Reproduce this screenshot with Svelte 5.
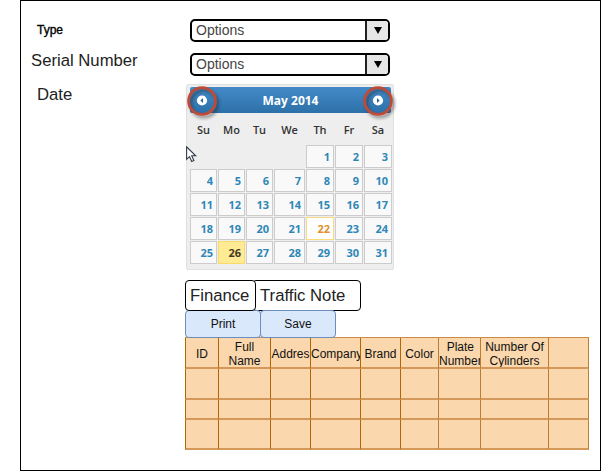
<script>
  const weekdays = ['Su', 'Mo', 'Tu', 'We', 'Th', 'Fr', 'Sa'];
  const cells = [...Array(4).fill(null), ...Array.from({ length: 31 }, (_, i) => i + 1)];
  const headers = ['ID', 'Full Name', 'Addres', 'Company', 'Brand', 'Color', 'Plate Number', 'Number Of Cylinders', ''];
  const rows = ['first', 'second', 'third'];
</script>

{#snippet arrow(dir)}
  <svg class="ring {dir}" width="42" height="42" viewBox="0 0 42 42">
    <defs>
      <filter id="shade-{dir}" x="-30%" y="-30%" width="160%" height="160%">
        <feDropShadow dx="2" dy="2.5" stdDeviation="1.5" flood-color="#222" flood-opacity=".5" />
      </filter>
    </defs>
    <circle cx="20" cy="20" r="13.4" fill="none" stroke="#bd4b37" stroke-width="2.8" filter="url(#shade-{dir})" />
    <circle cx="20" cy="19.5" r="5.1" fill="#fff" />
    <path d={dir === 'prev' ? 'M21 17v5L18.4 19.5z' : 'M19 17v5L21.6 19.5z'} fill="#2b6597" />
  </svg>
{/snippet}

<div class="frame">
  <div class="labels">
    <span class="type">Type</span>
    <span class="serial">Serial Number</span>
    <span class="date">Date</span>
  </div>
  <div class="main">
    {#each ['type', 'serial'] as field (field)}
      <div class="select">
        <span>Options</span>
        <i><svg width="8" height="7" viewBox="0 0 8 7"><path d="M0 0h8L4 7z" /></svg></i>
      </div>
    {/each}

    <div class="calendar">
      <div class="title">May 2014{@render arrow('prev')}{@render arrow('next')}</div>
      <div class="grid week">
        {#each weekdays as day}<span>{day}</span>{/each}
      </div>
      <div class="grid days">
        {#each cells as day}
          <span class:day class:today={day === 26} class:picked={day === 22}>{day ?? ''}</span>
        {/each}
      </div>
      <svg class="cursor" width="12" height="17" viewBox="0 0 12 17">
        <path d="M.6.8v12.5l2.9-2.7 2.2 4.9 2.2-1-2.2-4.7h4z" fill="#fff" stroke="#333a4c" stroke-width="1.1" />
      </svg>
    </div>

    <div class="tabs"><span class="finance">Finance</span><span class="note">Traffic Note</span></div>
    <div class="buttons"><button>Print</button><button>Save</button></div>
    <div class="table">
      <div class="row head">
        {#each headers as h}<div><span>{h}</span></div>{/each}
      </div>
      {#each rows as row}
        <div class="row {row}">{#each headers as h}<div></div>{/each}</div>
      {/each}
    </div>
  </div>
</div>

<style>
  :global(body) { background: #fff; }
  .frame {
    box-sizing: border-box; width: 581px; height: 471px; margin-left: 20px;
    border: 1px solid #000; display: flex; background: #fff;
    font-family: "Liberation Sans", Arial, sans-serif; color: #222;
  }
  .labels { width: 164px; flex: none; display: flex; flex-direction: column; font-size: 16.7px; white-space: nowrap; }
  .type { font-size: 12px; line-height: 16px; margin: 21px 0 0 16px; color: #000; -webkit-text-stroke: .35px #000; }
  .serial { line-height: 20px; margin: 13px 0 0 10px; }
  .date { line-height: 20px; margin: 14px 0 0 16px; }
  .main { flex: none; width: 404px; padding-top: 18px; }
  .select {
    box-sizing: border-box; width: 200px; height: 23px; margin: 0 0 11px 5px;
    border: 2px solid #000; border-radius: 5px; overflow: hidden; display: flex;
    font-size: 14px; line-height: 19px; color: #444;
  }
  .select span { flex: 1; padding-left: 4px; }
  .select i { box-sizing: border-box; width: 23px; border-left: 2px solid #222; background: #e6e6e6; display: flex; align-items: center; justify-content: center; }
  .calendar {
    box-sizing: border-box; position: relative; width: 208px; height: 186px;
    margin: -3px 0 0 1px; padding: 2px 2px 0 3px; border: 1px solid #e0e0e0; border-radius: 2px;
    background: #eee; font-family: "Open Sans", "Noto Sans", sans-serif; font-weight: 700; font-size: 11px;
  }
  .title {
    position: relative; height: 26px; border-radius: 2px; color: #fff; text-align: center;
    font-size: 12px; line-height: 27px; background: linear-gradient(#438bc8, #2d70a9);
  }
  .ring { position: absolute; top: -6px; }
  .prev { left: -8px; }
  .next { right: -9px; }
  .grid { display: grid; grid-template-columns: 27px 27px 27px 31px 28px 28px 28px; column-gap: 1px; }
  .week { height: 32px; line-height: 33px; text-align: center; color: #333; font-weight: 600; }
  .days { grid-auto-rows: 23px; row-gap: 1px; }
  .days span { box-sizing: border-box; text-align: right; padding-right: 3px; line-height: 21px; }
  .day { border: 1px solid #ccc; background: #f9f9f9; color: #2e87b7; }
  .days .picked { border-color: #f6dc7d; background: #fff; color: #e0912d; }
  .days .today { border-color: #f8d96a; background: #ffeb94; color: #443a22; }
  .cursor { position: absolute; left: -1px; top: 61px; }
  .tabs { height: 31px; margin-top: 10px; display: flex; font-size: 16.7px; line-height: 29px; color: #222; }
  .tabs span { box-sizing: border-box; height: 31px; border: 1px solid #000; border-radius: 4px; background: #fff; white-space: nowrap; }
  .finance { width: 71px; padding-left: 4px; z-index: 1; }
  .note { width: 109px; margin-left: -4px; padding-left: 7px; }
  .buttons { display: flex; height: 28px; margin-top: -1px; }
  button {
    box-sizing: border-box; width: 76px; height: 28px; padding: 0; border: 1px solid #6c8ebf; border-radius: 4px;
    background: #dae8fc; font: 12px "Liberation Sans", Arial, sans-serif; color: #111;
  }
  button + button { margin-left: -1px; }
  .table { width: 404px; margin-top: -1px; background: #fad7ac; border-top: 1px solid #c98b48; box-sizing: border-box; }
  .row { display: grid; grid-template-columns: 33px 52px 40px 50px 40px 38px 42px 68px 41px; }
  .row > div { box-sizing: border-box; border-left: 1px solid #b46504; border-bottom: 2px solid #d3985a; }
  .row > div:nth-child(n + 7) { border-left-color: #bd7c32; }
  .row > div:last-child { border-right: 1px solid #bd7c32; }
  .head { height: 31px; font-size: 12px; line-height: 14px; color: #111; }
  .head div { display: flex; align-items: center; justify-content: safe center; overflow: hidden; height: 31px; text-align: center; }
  .head span { margin-top: 3px; }
  .first, .first div { height: 31px; }
  .second, .second div { height: 20px; }
  .third, .third div { height: 30px; }
</style>
